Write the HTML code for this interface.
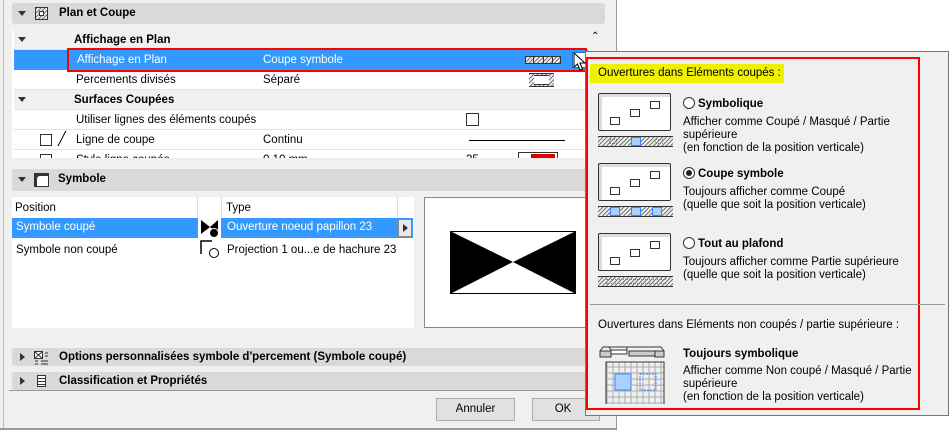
<!DOCTYPE html>
<html><head><meta charset="utf-8"><style>
*{box-sizing:border-box;margin:0;padding:0}
body{width:951px;height:430px;background:#fff;font-family:"Liberation Sans",sans-serif;font-size:11.5px;color:#000;position:relative;overflow:hidden}
.a{position:absolute}
.bar{position:absolute;background:#d9d9d9;border-radius:3px;font-weight:bold;font-size:11.5px;line-height:21px}
.tri{position:absolute;width:0;height:0;border-left:4px solid transparent;border-right:4px solid transparent;border-top:5px solid #333}
.trr{position:absolute;width:0;height:0;border-top:4px solid transparent;border-bottom:4px solid transparent;border-left:5px solid #333}
.row{position:absolute;left:14px;width:574px;height:20px;line-height:20px;border-bottom:1px solid #e3e3e3}
.t{position:absolute;white-space:nowrap}
.hatch{background:repeating-linear-gradient(135deg,#777 0 1px,#eee 1px 3px)}
.p{position:absolute;white-space:nowrap;line-height:13px;font-size:11.5px}
.radio{display:inline-block;width:12px;height:12px;border:1px solid #333;border-radius:50%;background:#fff;vertical-align:-2px;margin-right:3px;position:relative}
.ico{position:absolute;width:76px;height:40px}
</style></head><body>
<div class="a" style="left:0;top:0;width:617px;height:430px;background:#f0f0f0;border-right:1px solid #999;border-bottom:2px solid #999"></div>
<div class="a" style="left:3px;top:0;width:1px;height:428px;background:#bbb"></div>

<div class="bar" style="left:12px;top:3px;width:593px;height:21px"><span class="tri" style="left:6px;top:8px"></span>
<span class="a hatch" style="left:23px;top:4px;width:13px;height:13px;border:1px solid #333"></span><span class="a" style="left:27px;top:8px;width:5px;height:5px;background:#fff;border:1px solid #333"></span>
<span class="t" style="left:47px">Plan et Coupe</span></div>

<div class="a" style="left:12px;top:30px;width:593px;height:128px;background:#fff"></div>
<div class="row" style="top:30px;background:#f0f0f0;font-weight:bold"><span class="tri" style="left:4px;top:7px"></span><span class="t" style="left:60px">Affichage en Plan</span></div>
<div class="a" style="left:588px;top:30px;width:17px;height:128px;background:#f0f0f0"></div>
<div class="t" style="left:591px;top:31px;font-size:10px">⌃</div>
<div class="row" style="top:50px;background:#3399ff;color:#fff;border:none"><span class="t" style="left:63px">Affichage en Plan</span><span class="t" style="left:249px">Coupe symbole</span>
<span class="a hatch" style="left:511px;top:6px;width:36px;height:8px;border:1px solid #333"></span>
<span class="a" style="left:519px;top:6px;width:20px;height:8px;border-left:1px solid #333;border-right:1px solid #333;background:linear-gradient(90deg,transparent 9px,#333 9px 10px,transparent 10px)"></span>
<span class="a" style="left:558px;top:2px;width:14px;height:16px;background:#fff;border:1px solid #1a6fd0"></span><span class="trr" style="left:563px;top:6px"></span></div>
<div class="a" style="left:67px;top:48px;width:520px;height:24px;border:2px solid #f00"></div>
<div class="row" style="top:70px"><span class="t" style="left:62px">Percements divisés</span><span class="t" style="left:249px">Séparé</span>
<span class="a hatch" style="left:515px;top:3px;width:25px;height:14px;border-top:1px solid #333;border-bottom:1px solid #333"></span><span class="a" style="left:520px;top:5px;width:15px;height:10px;background:#fff;border-top:1px solid #333;border-bottom:1px solid #333"></span></div>
<div class="row" style="top:90px;background:#f0f0f0;font-weight:bold"><span class="tri" style="left:4px;top:7px"></span><span class="t" style="left:60px">Surfaces Coupées</span></div>
<div class="row" style="top:110px"><span class="t" style="left:62px">Utiliser lignes des éléments coupés</span><span class="a" style="left:452px;top:3px;width:13px;height:13px;border:1px solid #333"></span></div>
<div class="row" style="top:130px"><span class="a" style="left:26px;top:4px;width:12px;height:12px;border:1px solid #333"></span><span class="t" style="left:44px;top:-1px;font-size:13px">╱</span><span class="t" style="left:62px">Ligne de coupe</span><span class="t" style="left:249px">Continu</span><span class="a" style="left:455px;top:10px;width:96px;height:1px;background:#000"></span></div>
<div class="row" style="top:150px;height:8px;overflow:hidden;border:none"><span class="a" style="left:26px;top:4px;width:12px;height:12px;border:1px solid #333"></span><span class="t" style="left:62px;top:0">Style ligne coupée</span><span class="t" style="left:249px">0.10 mm</span><span class="t" style="left:452px">25</span><span class="a" style="left:504px;top:2px;width:40px;height:12px;border:1px solid #333;background:#fff"></span><span class="a" style="left:517px;top:4px;width:24px;height:8px;background:#d00"></span></div>

<div class="bar" style="left:12px;top:169px;width:593px;height:22px"><span class="tri" style="left:6px;top:8px"></span>
<svg class="a" style="left:22px;top:4px" width="15" height="14"><rect x="0.5" y="0.5" width="14" height="13" fill="#fff" stroke="#333"/><path d="M1 1H14V3H6Q3 3 3 6V13H1Z" fill="#333"/></svg>
<span class="t" style="left:46px">Symbole</span></div>

<div class="a" style="left:12px;top:197px;width:402px;height:131px;background:#fff"></div>
<div class="t" style="left:15px;top:202px">Position</div><div class="t" style="left:226px;top:202px">Type</div>
<div class="a" style="left:197px;top:197px;width:1px;height:21px;background:#ddd"></div><div class="a" style="left:221px;top:197px;width:1px;height:21px;background:#ddd"></div><div class="a" style="left:397px;top:197px;width:1px;height:21px;background:#ddd"></div>
<div class="a" style="left:12px;top:218px;width:401px;height:20px;background:#3399ff"></div>
<div class="a" style="left:198px;top:218px;width:23px;height:20px;background:#fff"></div>
<div class="t" style="left:16px;top:221px;color:#fff">Symbole coupé</div>
<svg class="a" style="left:200px;top:219px" width="20" height="19"><path d="M1 1L10 8L1 15Z M10 8L18 1V15Z" fill="#000"/><circle cx="14" cy="14" r="4.5" fill="#000" stroke="#fff"/></svg>
<div class="t" style="left:227px;top:221px;color:#fff">Ouverture noeud papillon 23</div>
<div class="a" style="left:398px;top:219px;width:14px;height:18px;background:#e8e8e8;border:1px solid #888"></div><span class="trr" style="left:403px;top:224px"></span>
<div class="t" style="left:16px;top:244px">Symbole non coupé</div>
<svg class="a" style="left:200px;top:239px" width="20" height="19"><path d="M1 15V2H12" fill="none" stroke="#000" stroke-width="1.5"/><circle cx="14" cy="14" r="4.5" fill="#fff" stroke="#000"/></svg>
<div class="t" style="left:227px;top:244px">Projection 1 ou...e de hachure 23</div>

<div class="a" style="left:424px;top:197px;width:165px;height:131px;background:#fff;border:1px solid #888;border-right:none"></div>
<svg class="a" style="left:450px;top:231px" width="127" height="64"><rect x="0.5" y="0.5" width="125" height="62" fill="#fff" stroke="#000"/><path d="M0 0L63 31L126 0V63L63 31L0 63Z" fill="#000"/></svg>

<div class="bar" style="left:12px;top:348px;width:580px;height:18px;line-height:18px"><span class="trr" style="left:8px;top:5px"></span>
<svg class="a" style="left:21px;top:2px" width="16" height="15"><rect x="1.5" y="1.5" width="8" height="7" fill="#fff" stroke="#333"/><path d="M2 2L9 8M9 2L2 8" stroke="#333"/><path d="M12 3H15M12 6H15M8 11H15M8 14H15M2 11H5M2 14H5" stroke="#333"/></svg>
<span class="t" style="left:47px">Options personnalisées symbole d'percement (Symbole coupé)</span></div>
<div class="bar" style="left:12px;top:372px;width:580px;height:18px;line-height:18px"><span class="trr" style="left:8px;top:5px"></span><span class="a" style="left:25px;top:3px;width:9px;height:12px;border:1px solid #333;background:repeating-linear-gradient(#fff 0 2px,#333 2px 3px)"></span><span class="t" style="left:47px">Classification et Propriétés</span></div>
<div class="a" style="left:9px;top:390px;width:596px;height:1px;background:#999"></div>

<div class="a" style="left:436px;top:398px;width:79px;height:23px;background:#e1e1e1;border:1px solid #adadad;text-align:center;line-height:21px;font-size:11.5px">Annuler</div>
<div class="a" style="left:532px;top:398px;width:68px;height:23px;background:#e1e1e1;border:1px solid #adadad;text-align:center;line-height:21px;font-size:11.5px;padding-right:6px">OK</div>

<div class="a" style="left:585px;top:51px;width:364px;height:365px;background:#f0f0f0;border:1px solid #777"></div>
<div class="a" style="left:586px;top:57px;width:334px;height:353px;border:2px solid #f00"></div>
<svg class="a" style="left:573px;top:52px" width="14" height="20"><path d="M1 1V15L4.5 12L7 18L9.5 17L7 11H12Z" fill="#fff" stroke="#000"/></svg>
<div class="a" style="left:590px;top:64px;width:194px;height:19px;background:#f0f000"></div>
<div class="p" style="left:598px;top:67px">Ouvertures dans Eléments coupés :</div>

<div class="ico" style="left:598px;top:93px">
<div class="a" style="left:0;top:0;width:73px;height:38px;border:1px solid #333;border-radius:2px;background:#fff;box-shadow:inset 3px 3px 0 #ddd"></div>
<div class="a" style="left:12px;top:24px;width:10px;height:8px;border:1px solid #333"></div><div class="a" style="left:32px;top:16px;width:10px;height:8px;border:1px solid #333"></div><div class="a" style="left:52px;top:8px;width:10px;height:8px;border:1px solid #333"></div></div>
<div class="a hatch" style="left:598px;top:136px;width:75px;height:11px;border-top:1px solid #333;border-bottom:1px solid #333"></div>
<div class="a" style="left:631px;top:137px;width:10px;height:9px;background:#aad0ff;border:1px solid #3388ff"></div>
<div class="a" style="left:609px;top:139px;width:8px;height:5px;border:1px dotted #3388ff"></div><div class="a" style="left:655px;top:139px;width:8px;height:5px;border:1px dotted #3388ff"></div>

<div class="ico" style="left:598px;top:163px">
<div class="a" style="left:0;top:0;width:73px;height:38px;border:1px solid #333;border-radius:2px;background:#fff;box-shadow:inset 3px 3px 0 #ddd"></div>
<div class="a" style="left:12px;top:24px;width:10px;height:8px;border:1px solid #333"></div><div class="a" style="left:32px;top:16px;width:10px;height:8px;border:1px solid #333"></div><div class="a" style="left:52px;top:8px;width:10px;height:8px;border:1px solid #333"></div></div>
<div class="a hatch" style="left:598px;top:206px;width:75px;height:11px;border-top:1px solid #333;border-bottom:1px solid #333"></div>
<div class="a" style="left:610px;top:207px;width:10px;height:9px;background:#aad0ff;border:1px solid #3388ff"></div><div class="a" style="left:631px;top:207px;width:10px;height:9px;background:#aad0ff;border:1px solid #3388ff"></div><div class="a" style="left:652px;top:207px;width:10px;height:9px;background:#aad0ff;border:1px solid #3388ff"></div>

<div class="ico" style="left:598px;top:233px">
<div class="a" style="left:0;top:0;width:73px;height:38px;border:1px solid #333;border-radius:2px;background:#fff;box-shadow:inset 3px 3px 0 #ddd"></div>
<div class="a" style="left:12px;top:24px;width:10px;height:8px;border:1px solid #333"></div><div class="a" style="left:32px;top:16px;width:10px;height:8px;border:1px solid #333"></div><div class="a" style="left:52px;top:8px;width:10px;height:8px;border:1px solid #333"></div></div>
<div class="a hatch" style="left:598px;top:276px;width:75px;height:11px;border-top:1px solid #333;border-bottom:1px solid #333"></div>
<div class="a" style="left:606px;top:279px;width:60px;height:5px;border-top:1px dotted #3388ff;border-bottom:1px dotted #3388ff"></div>

<div class="p" style="left:683px;top:97px;font-weight:bold"><span class="radio"></span>Symbolique</div>
<div class="p" style="left:683px;top:116px">Afficher comme Coupé / Masqué / Partie</div>
<div class="p" style="left:683px;top:129px">supérieure</div>
<div class="p" style="left:683px;top:142px">(en fonction de la position verticale)</div>
<div class="p" style="left:683px;top:167px;font-weight:bold"><span class="radio"><span class="a" style="left:2px;top:2px;width:6px;height:6px;border-radius:50%;background:#222"></span></span>Coupe symbole</div>
<div class="p" style="left:683px;top:186px">Toujours afficher comme Coupé</div>
<div class="p" style="left:683px;top:199px">(quelle que soit la position verticale)</div>
<div class="p" style="left:683px;top:237px;font-weight:bold"><span class="radio"></span>Tout au plafond</div>
<div class="p" style="left:683px;top:256px">Toujours afficher comme Partie supérieure</div>
<div class="p" style="left:683px;top:269px">(quelle que soit la position verticale)</div>

<div class="a" style="left:590px;top:304px;width:355px;height:1px;background:#999"></div>
<div class="p" style="left:598px;top:319px">Ouvertures dans Eléments non coupés / partie supérieure :</div>

<svg class="a" style="left:599px;top:345px" width="66" height="62">
<path d="M1 6L4 2H28V5H12L10 2M28 2H62L65 6V11H58V8H40L38 11H30V6" fill="none" stroke="#333"/>
<rect x="1" y="6" width="11" height="6" fill="#ccc" stroke="#333"/><rect x="12" y="5" width="16" height="4" fill="#fff" stroke="#333"/><rect x="30" y="6" width="26" height="5" fill="#ccc" stroke="#333"/><rect x="56" y="6" width="9" height="6" fill="#ccc" stroke="#333"/>
<g stroke="#aaa"><path d="M8 17V59M14 17V59M20 17V59M26 17V59M32 17V59M38 17V59M44 17V59M50 17V59M56 17V59M62 17V59M7 22H65M7 28H65M7 34H65M7 40H65M7 46H65M7 52H65M7 58H65"/></g>
<path d="M7 59V17H65V59" fill="none" stroke="#333"/>
<rect x="16" y="29" width="16" height="16" fill="#aad0ff" stroke="#3388ff"/><rect x="41" y="29" width="16" height="16" fill="none" stroke="#3388ff" stroke-dasharray="2,1"/>
</svg>
<div class="p" style="left:683px;top:348px;font-weight:bold">Toujours symbolique</div>
<div class="p" style="left:683px;top:365px">Afficher comme Non coupé / Masqué / Partie</div>
<div class="p" style="left:683px;top:378px">supérieure</div>
<div class="p" style="left:683px;top:391px">(en fonction de la position verticale)</div>
</body></html>
